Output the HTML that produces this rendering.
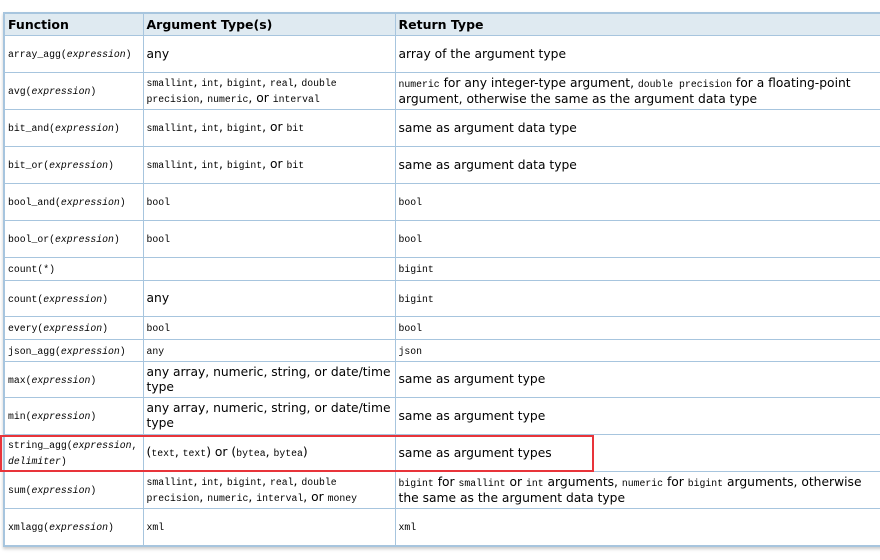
<!DOCTYPE html>
<html><head><style>
body{margin:0;background:#fff;width:880px;height:560px;overflow:hidden;position:relative;font-family:"DejaVu Sans","Liberation Sans",sans-serif;font-size:12.3px;color:#000}
table{position:absolute;left:3px;top:12px;width:882px;border-collapse:collapse;table-layout:fixed;border-top:2px solid #a7c5de;border-left:2px solid #a7c5de;border-bottom:2px solid #a7c5de;box-shadow:0 2px 3px #ccc}
td,th{border:1px solid #a7c5de;padding:0 3px;vertical-align:middle;line-height:15px;text-align:left}
th{background:#dfeaf1;font-weight:bold;font-size:12.5px;height:21px}
code{font-family:"Liberation Mono",monospace;font-size:9.8px}
code i{font-style:italic}
.box{position:absolute;left:0;top:435px;width:590px;height:33px;border:2px solid #e8343a}
</style></head><body>
<table>
<colgroup><col style="width:139px"><col style="width:252px"><col></colgroup>
<tr><th>Function</th><th>Argument Type(s)</th><th>Return Type</th></tr>
<tr style="height:37px"><td><code>array_agg(<i>expression</i>)</code></td><td>any</td><td>array of the argument type</td></tr>
<tr style="height:37px"><td><code>avg(<i>expression</i>)</code></td><td><code>smallint</code>, <code>int</code>, <code>bigint</code>, <code>real</code>, <code>double precision</code>, <code>numeric</code>, or <code>interval</code></td><td><code>numeric</code> for any integer-type argument, <code>double precision</code> for a floating-point argument, otherwise the same as the argument data type</td></tr>
<tr style="height:37px"><td><code>bit_and(<i>expression</i>)</code></td><td><code>smallint</code>, <code>int</code>, <code>bigint</code>, or <code>bit</code></td><td>same as argument data type</td></tr>
<tr style="height:37px"><td><code>bit_or(<i>expression</i>)</code></td><td><code>smallint</code>, <code>int</code>, <code>bigint</code>, or <code>bit</code></td><td>same as argument data type</td></tr>
<tr style="height:37px"><td><code>bool_and(<i>expression</i>)</code></td><td><code>bool</code></td><td><code>bool</code></td></tr>
<tr style="height:37px"><td><code>bool_or(<i>expression</i>)</code></td><td><code>bool</code></td><td><code>bool</code></td></tr>
<tr style="height:23px"><td><code>count(*)</code></td><td></td><td><code>bigint</code></td></tr>
<tr style="height:36px"><td><code>count(<i>expression</i>)</code></td><td>any</td><td><code>bigint</code></td></tr>
<tr style="height:23px"><td><code>every(<i>expression</i>)</code></td><td><code>bool</code></td><td><code>bool</code></td></tr>
<tr style="height:22px"><td><code>json_agg(<i>expression</i>)</code></td><td><code>any</code></td><td><code>json</code></td></tr>
<tr style="height:36px"><td><code>max(<i>expression</i>)</code></td><td>any array, numeric, string, or date/time type</td><td>same as argument type</td></tr>
<tr style="height:37px"><td><code>min(<i>expression</i>)</code></td><td>any array, numeric, string, or date/time type</td><td>same as argument type</td></tr>
<tr style="height:37px"><td><code>string_agg(<i>expression</i>, <i>delimiter</i>)</code></td><td>(<code>text</code>, <code>text</code>) or (<code>bytea</code>, <code>bytea</code>)</td><td>same as argument types</td></tr>
<tr style="height:37px"><td><code>sum(<i>expression</i>)</code></td><td><code>smallint</code>, <code>int</code>, <code>bigint</code>, <code>real</code>, <code>double precision</code>, <code>numeric</code>, <code>interval</code>, or <code>money</code></td><td><code>bigint</code> for <code>smallint</code> or <code>int</code> arguments, <code>numeric</code> for <code>bigint</code> arguments, otherwise the same as the argument data type</td></tr>
<tr style="height:37px"><td><code>xmlagg(<i>expression</i>)</code></td><td><code>xml</code></td><td><code>xml</code></td></tr>
</table>
<div class="box"></div>
</body></html>
